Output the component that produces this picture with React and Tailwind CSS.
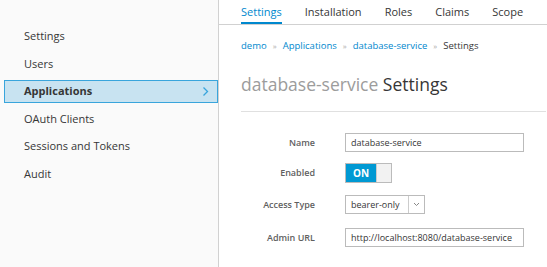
import React from "react";

const navItems = ["Settings", "Users", "Applications", "OAuth Clients", "Sessions and Tokens", "Audit"];
const tabs = ["Settings", "Installation", "Roles", "Claims", "Scope"];

function Field({ label, children }) {
  return (
    <div className="flex items-center">
      <div className="w-[74px] text-right text-[9px] font-semibold text-[#5f5f5f]">{label}</div>
      <div className="ml-[30px] flex items-center">{children}</div>
    </div>
  );
}

export default function App() {
  return (
    <div
      className="flex h-[267px] w-[547px] overflow-hidden bg-white text-[#363636]"
      style={{ fontFamily: '"Open Sans", "Noto Sans", sans-serif' }}
    >
      <aside className="w-[219px] shrink-0 border-r border-[#d1d1d1] bg-[#fafafa] pt-[25px] pl-[4px]">
        <ul className="flex flex-col gap-[4.5px]">
          {navItems.map((item) => {
            const active = item === "Applications";
            return (
              <li
                key={item}
                className={
                  active
                    ? "flex h-[23px] items-center justify-between border border-[#39a5dc] bg-[#c8e3f1] pl-[19px] pr-[8px] text-[11px] font-bold text-[#363636]"
                    : "flex h-[23px] items-center border border-transparent pl-[19px] text-[11px] text-[#363636]"
                }
              >
                <span>{item}</span>
                {active && (
                  <svg width="7" height="11" viewBox="0 0 7 11" fill="none">
                    <path d="M1.5 1.5 L5.5 5.5 L1.5 9.5" stroke="#39a5dc" strokeWidth="1.3" />
                  </svg>
                )}
              </li>
            );
          })}
        </ul>
      </aside>
      <main className="flex-1">
        <nav className="flex h-[25px] gap-[23px] border-b border-[#d1d1d1] pl-[22px]">
          {tabs.map((t) => (
            <div
              key={t}
              className={
                t === "Settings"
                  ? "flex items-center border-b-2 border-[#0088ce] pt-[2px] text-[11px] text-[#0088ce]"
                  : "flex items-center border-b-2 border-transparent pt-[2px] text-[11px] text-[#363636]"
              }
            >
              {t}
            </div>
          ))}
        </nav>
        <div className="pl-[22px]">
          <div className="mt-[14px] flex items-center gap-[6px] text-[9.5px] leading-[14px]">
            <span className="text-[#0088ce]">demo</span>
            <span className="text-[#aaa] text-[8px]">»</span>
            <span className="text-[#0088ce]">Applications</span>
            <span className="text-[#aaa] text-[8px]">»</span>
            <span className="text-[#0088ce]">database-service</span>
            <span className="text-[#aaa] text-[8px]">»</span>
            <span className="text-[#363636]">Settings</span>
          </div>
          <h1 className="mt-[19px] text-[17.5px] leading-[24px]">
            <span className="text-[#9c9c9c]">database-service</span>{" "}
            <span className="text-[#363636]">Settings</span>
          </h1>
          <div className="mt-[15px] mr-[1px] border-t border-[#e0e0e0]"></div>
          <div className="mt-[21px] flex flex-col">
            <Field label="Name">
              <div className="flex h-[19px] w-[179px] items-center border border-[#bbb] px-[5px] text-[9px] text-[#363636] whitespace-nowrap">
                database-service
              </div>
            </Field>
            <div className="mt-[11px]">
              <Field label="Enabled">
                <div className="flex h-[20px] w-[47px] border border-[#bbb]">
                  <div className="flex w-[30px] items-center justify-center bg-[#0099d3] text-[10px] font-bold text-white">ON</div>
                  <div className="flex-1 bg-[#f2f2f2] border-l border-[#ccc]"></div>
                </div>
              </Field>
            </div>
            <div className="mt-[12px]">
              <Field label="Access Type">
                <div className="flex h-[19px] w-[80px] items-center border border-[#bbb] text-[9px] text-[#363636] whitespace-nowrap">
                  <span className="flex-1 pl-[5px]">bearer-only</span>
                  <span className="flex h-full w-[16px] items-center justify-center border-l border-[#ccc]">
                    <svg width="7" height="5" viewBox="0 0 7 5" fill="none">
                      <path d="M1 1 L3.5 3.5 L6 1" stroke="#888" strokeWidth="1" />
                    </svg>
                  </span>
                </div>
              </Field>
            </div>
            <div className="mt-[14px]">
              <Field label="Admin URL">
                <div className="flex h-[19px] w-[179px] items-center border border-[#bbb] px-[5px] text-[9px] text-[#363636] whitespace-nowrap">
                  http://localhost:8080/database-service
                </div>
              </Field>
            </div>
          </div>
        </div>
      </main>
    </div>
  );
}
